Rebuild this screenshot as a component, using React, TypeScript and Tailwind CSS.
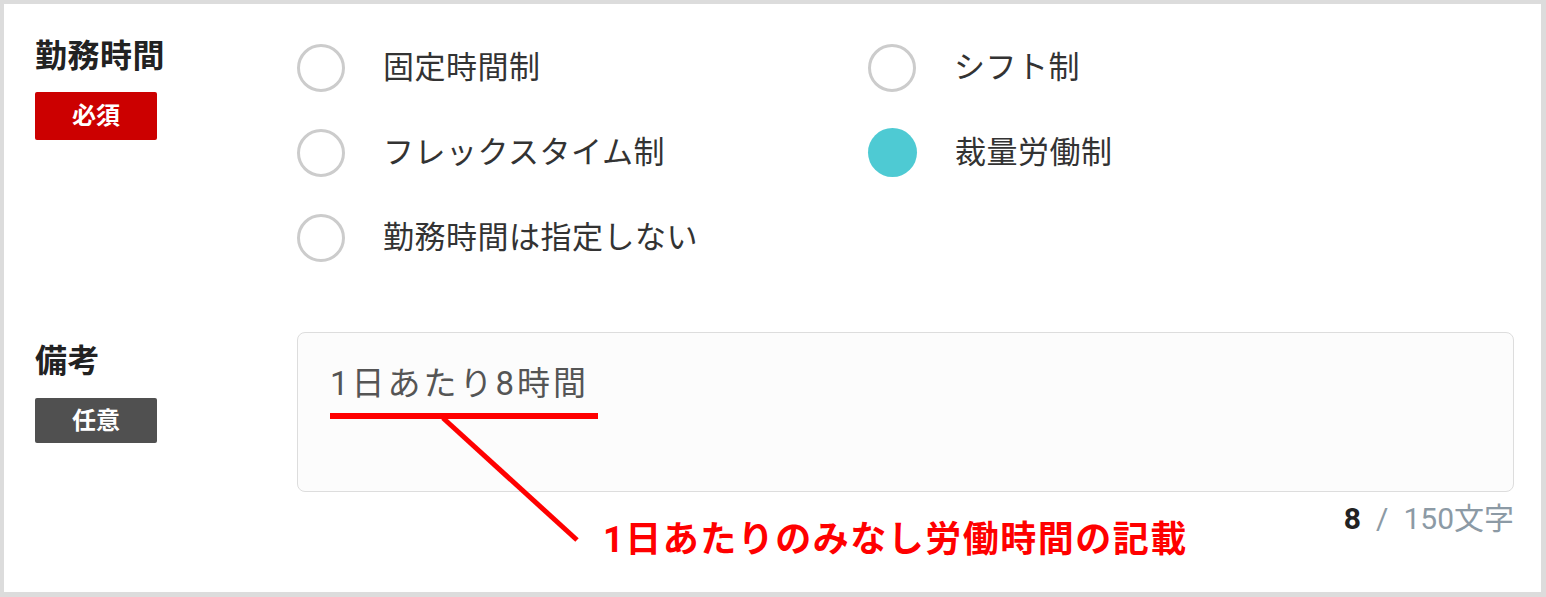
const FONT = "font-['Roboto','Noto_Sans_CJK_JP',sans-serif]";

type Option = { label: string; checked?: boolean };

const OPTIONS: Option[] = [
  { label: "固定時間制" },
  { label: "シフト制" },
  { label: "フレックスタイム制" },
  { label: "裁量労働制", checked: true },
  { label: "勤務時間は指定しない" },
];

function Radio({ label, checked }: Option) {
  return (
    <label className="flex h-[85px] items-center gap-[38px]">
      {checked ? (
        <span className="h-[49px] w-[49px] shrink-0 rounded-full bg-[#4ecad3]" />
      ) : (
        <span className="h-[48px] w-[48px] shrink-0 rounded-full border-[3px] border-[#cccccc] bg-white" />
      )}
      <span className="text-[31px] leading-none tracking-[0.5px] text-[#333333]">{label}</span>
    </label>
  );
}

function FieldLabel({ title, badge, required }: { title: string; badge: string; required?: boolean }) {
  return (
    <div className="w-[262px] shrink-0">
      <p className="text-[32px] font-bold leading-none tracking-[0.5px] text-[#222222]">{title}</p>
      <span
        className={
          required
            ? "mt-[20px] flex h-[48px] w-[122px] items-center justify-center rounded-[2px] bg-[#cc0000] text-[24px] font-bold text-white"
            : "mt-[21px] flex h-[45px] w-[122px] items-center justify-center rounded-[2px] bg-[#505050] text-[24px] font-bold text-white"
        }
      >
        {badge}
      </span>
    </div>
  );
}

export default function App() {
  return (
    <div className={`${FONT} relative h-[597px] w-[1546px] overflow-hidden border-[4px] border-r-[5px] border-b-[5px] border-[#dcdcdc] bg-white`}>
      <div className="pl-[31px] pr-[27px] pt-[21px]">
        {/* 勤務時間 */}
        <div className="flex">
          <div className="pt-[15px]">
            <FieldLabel title="勤務時間" badge="必須" required />
          </div>
          <div className="grid flex-1 grid-cols-[571px_1fr]">
            {OPTIONS.map((o) => (
              <Radio key={o.label} {...o} />
            ))}
          </div>
        </div>

        {/* 備考 */}
        <div className="mt-[52px] flex">
          <div className="pt-[13px]">
            <FieldLabel title="備考" badge="任意" />
          </div>
          <div className="flex-1">
            <div className="h-[160px] rounded-[8px] border border-[#dddddd] bg-[#fcfcfc] pl-[32px] pt-[34px]">
              <p className="text-[33px] leading-none tracking-[3px] text-[#555555]">1日あたり8時間</p>
            </div>
            <p className="mt-[12px] text-right text-[30px] leading-none">
              <span className="font-bold text-[#222222]">8</span>
              <span className="mx-[15px] text-[#8c9aa5]">/</span>
              <span className="text-[#8c9aa5]">150文字</span>
            </p>
          </div>
        </div>
      </div>

      {/* annotation overlay */}
      <svg className="pointer-events-none absolute left-[-4px] top-[-4px]" width="1546" height="597">
        <line x1="330" y1="416" x2="598" y2="416" stroke="#ff0000" strokeWidth="6" />
        <line x1="443" y1="418" x2="577" y2="540" stroke="#ff0000" strokeWidth="5" />
      </svg>
      <p className="absolute left-[599px] top-[518px] text-[36px] font-bold leading-none tracking-[1.5px] text-[#ff0000]">
        1日あたりのみなし労働時間の記載
      </p>
    </div>
  );
}
